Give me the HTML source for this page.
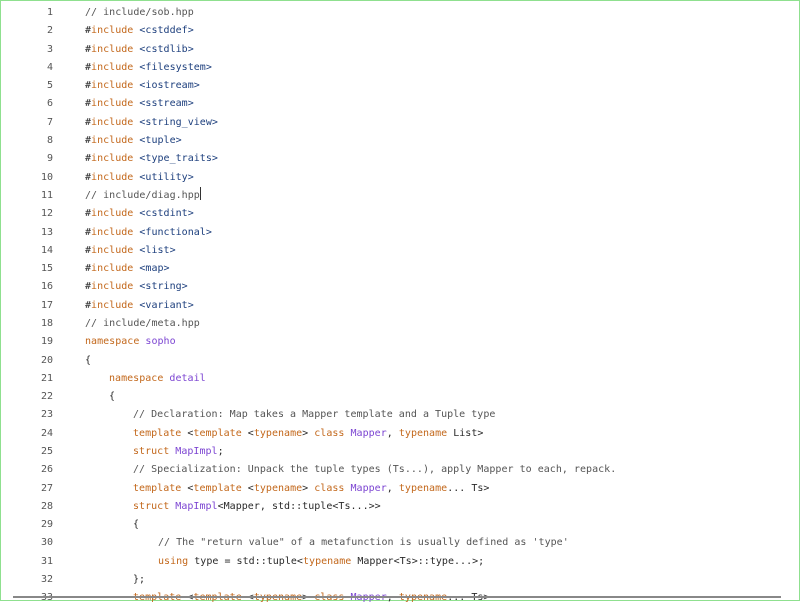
<!DOCTYPE html><html><head><style>
html,body{margin:0;padding:0;background:#fff}
body{width:798px;height:599px;border:1px solid #8fe08f;overflow:hidden;position:relative;font-family:"DejaVu Sans Mono","Liberation Mono",monospace;font-size:10px;color:#2a2a2a}
.l{position:absolute;left:0;height:18px;line-height:18px;white-space:pre}
.n{position:absolute;left:0;width:52px;text-align:right;color:#555}
.c{position:absolute;letter-spacing:0.02px}
.k{color:#c3681c}.t{color:#7c45d2}.s{color:#1d3f7d}.m{color:#555}
.hr{position:absolute;left:12px;width:768px;top:595px;height:2px;background:#888}
.cur{display:inline-block;width:1px;height:13px;background:#333;vertical-align:-2px}
</style></head><body>
<div id="w"></div>
<script>
var L=[
'<span class="m">// include/sob.hpp</span>',
'#<span class="k">include</span> <span class="s">&lt;cstddef&gt;</span>',
'#<span class="k">include</span> <span class="s">&lt;cstdlib&gt;</span>',
'#<span class="k">include</span> <span class="s">&lt;filesystem&gt;</span>',
'#<span class="k">include</span> <span class="s">&lt;iostream&gt;</span>',
'#<span class="k">include</span> <span class="s">&lt;sstream&gt;</span>',
'#<span class="k">include</span> <span class="s">&lt;string_view&gt;</span>',
'#<span class="k">include</span> <span class="s">&lt;tuple&gt;</span>',
'#<span class="k">include</span> <span class="s">&lt;type_traits&gt;</span>',
'#<span class="k">include</span> <span class="s">&lt;utility&gt;</span>',
'<span class="m">// include/diag.hpp</span><span class="cur"></span>',
'#<span class="k">include</span> <span class="s">&lt;cstdint&gt;</span>',
'#<span class="k">include</span> <span class="s">&lt;functional&gt;</span>',
'#<span class="k">include</span> <span class="s">&lt;list&gt;</span>',
'#<span class="k">include</span> <span class="s">&lt;map&gt;</span>',
'#<span class="k">include</span> <span class="s">&lt;string&gt;</span>',
'#<span class="k">include</span> <span class="s">&lt;variant&gt;</span>',
'<span class="m">// include/meta.hpp</span>',
'<span class="k">namespace</span> <span class="t">sopho</span>',
'{',
'1<span class="k">namespace</span> <span class="t">detail</span>',
'1{',
'2<span class="m">// Declaration: Map takes a Mapper template and a Tuple type</span>',
'2<span class="k">template</span> &lt;<span class="k">template</span> &lt;<span class="k">typename</span>&gt; <span class="k">class</span> <span class="t">Mapper</span>, <span class="k">typename</span> List&gt;',
'2<span class="k">struct</span> <span class="t">MapImpl</span>;',
'2<span class="m">// Specialization: Unpack the tuple types (Ts...), apply Mapper to each, repack.</span>',
'2<span class="k">template</span> &lt;<span class="k">template</span> &lt;<span class="k">typename</span>&gt; <span class="k">class</span> <span class="t">Mapper</span>, <span class="k">typename</span>... Ts&gt;',
'2<span class="k">struct</span> <span class="t">MapImpl</span>&lt;Mapper, std::tuple&lt;Ts...&gt;&gt;',
'2{',
'3<span class="m">// The "return value" of a metafunction is usually defined as \'type\'</span>',
'3<span class="k">using</span> type = std::tuple&lt;<span class="k">typename</span> Mapper&lt;Ts&gt;::type...&gt;;',
'2};',
'2<span class="k">template</span> &lt;<span class="k">template</span> &lt;<span class="k">typename</span>&gt; <span class="k">class</span> <span class="t">Mapper</span>, <span class="k">typename</span>... Ts&gt;'
];
var X=[84,108,132,157];
var h='';for(var i=0;i<L.length;i++){var s=L[i],lv=0;if(/^[123]/.test(s)){lv=+s[0];s=s.slice(1);}var y=3+i*18.29;h+='<div class="l" style="top:'+y.toFixed(1)+'px;width:800px"><span class="n">'+(i+1)+'</span><span class="c" style="left:'+X[lv]+'px">'+s+'</span></div>';}
document.getElementById('w').innerHTML=h+'<div class="hr"></div>';
</script>
</body></html>
